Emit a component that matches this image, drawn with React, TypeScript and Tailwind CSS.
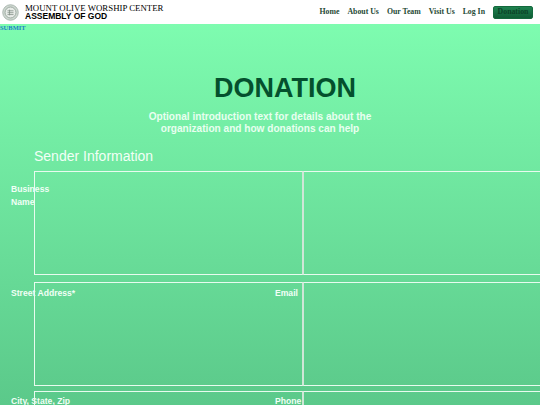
const navLinks = ["Home", "About Us", "Our Team", "Visit Us", "Log In"];

const rows = [
  { left: ["Business", "Name"], right: "", labelPad: "pt-[12px]", rowGap: "mb-[7px]" },
  { left: ["Street Address*"], right: "Email", labelPad: "pt-[5px]", rowGap: "mb-[5px]" },
  { left: ["City, State, Zip"], right: "Phone", labelPad: "pt-[4px]", rowGap: "" },
];

function Logo() {
  return (
    <svg viewBox="0 0 18 18" className="w-[17px] h-[17px] shrink-0">
      <circle cx="9" cy="9" r="8.2" fill="#cfd8d1" stroke="#a9b5ad" strokeWidth="1" />
      <circle cx="9" cy="9" r="5.8" fill="#e8ece8" stroke="#93a098" strokeWidth="0.9" />
      <path d="M5.8 7.2h6.4M5.8 9.2h6.4M5.8 11.2h6.4M8 6v6" stroke="#7f8c84" strokeWidth="0.8" fill="none" />
    </svg>
  );
}

export default function App() {
  return (
    <div className="h-[405px] overflow-hidden font-['Liberation_Sans',sans-serif] bg-gradient-to-b from-[#80ffb2] to-[#5bc98a]">
      <header className="h-6 bg-white flex items-center pl-[2px] pr-[7px]">
        <Logo />
        <div className="ml-[6px] text-black">
          <div className="font-['Liberation_Serif',serif] text-[8.8px] leading-[8px] whitespace-nowrap">MOUNT OLIVE WORSHIP CENTER</div>
          <div className="font-bold text-[8.5px] leading-[8px] whitespace-nowrap">ASSEMBLY OF GOD</div>
        </div>
        <nav className="ml-auto flex items-center gap-2 font-['Liberation_Serif',serif] font-bold text-[7.8px] text-[#1f4a35]">
          {navLinks.map((link) => (
            <a key={link}>{link}</a>
          ))}
          <a className="w-10 h-[13px] flex items-center justify-center rounded-[2px] border border-[#14693d] bg-gradient-to-b from-[#1f8350] to-[#0f5c35] text-[#0b4327]">
            Donation
          </a>
        </nav>
      </header>

      <a className="block font-['Liberation_Serif',serif] font-bold text-[6.5px] leading-[8px] text-[#1a80c8]">SUBMIT</a>

      <h1 className="mt-[40px] pl-[30px] text-center text-[27px] leading-8 font-bold text-[#04502d]">DONATION</h1>

      <p className="mt-[7px] ml-[140px] w-[240px] text-center text-[10.1px] leading-[12px] font-bold text-[#e8fff0]">
        Optional introduction text for details about the organization and how donations can help
      </p>

      <h2 className="mt-[12px] pl-[34px] text-[14px] leading-[18px] text-[#f1fff6]">Sender Information</h2>

      <form className="mt-[6px] pl-[11px]">
        {rows.map((row) => (
          <div key={row.left[0]} className={"flex text-[8.6px] leading-[13px] font-bold text-[#f1fff6] " + row.rowGap}>
            <label className={"w-[23px] shrink-0 whitespace-nowrap " + row.labelPad}>
              {row.left.map((line) => (
                <div key={line}>{line}</div>
              ))}
            </label>
            <div className="w-[269px] h-[104px] shrink-0 border border-[#e8fbef] border-r-[#cfe6d7]" />
            <label className={"w-[28px] -ml-[28px] shrink-0 " + row.labelPad}>{row.right}</label>
            <div className="w-[240px] h-[104px] shrink-0 border border-[#e8fbef] border-l-[#cfe6d7]" />
          </div>
        ))}
      </form>
    </div>
  );
}
